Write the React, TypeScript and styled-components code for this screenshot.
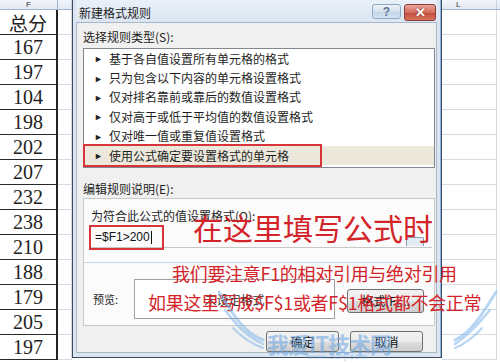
import styled, { createGlobalStyle } from 'styled-components'

const GlobalStyle = createGlobalStyle`
	html, body {
		margin: 0;
		padding: 0;
		background: #ffffff;
	}
	body {
		font-family: 'Noto Sans CJK SC', 'Noto Sans', sans-serif;
	}
`

const CJK = `'Noto Sans CJK SC', 'Noto Sans', sans-serif`

const Screen = styled.div`
	position: relative;
	width: 500px;
	height: 363px;
	overflow: hidden;
	display: flex;
	background: #fff;
`

const Sheet = styled.div<{ $w: number }>`
	width: ${(p) => p.$w}px;
	flex: none;
	display: flex;
	flex-direction: column;
`

const HeaderRow = styled.div`
	height: 10px;
	display: flex;
	background: linear-gradient(#f3f6fb, #e2e9f3);
	border-bottom: 1px solid #9eb6ce;
	box-sizing: border-box;
`

const HeaderCell = styled.div<{ $w: number; $bold?: boolean; $left?: boolean }>`
	width: ${(p) => p.$w}px;
	flex: none;
	font-family: 'Liberation Sans', sans-serif;
	font-size: 8px;
	line-height: 9px;
	color: #333;
	text-align: ${(p) => (p.$left ? 'left' : 'center')};
	padding-left: ${(p) => (p.$left ? 14 : 0)}px;
	border-right: 1px solid ${(p) => (p.$bold ? '#9eb6ce' : '#c5d2e0')};
	box-sizing: border-box;
`

const Row = styled.div`
	height: 25px;
	display: flex;
`

const Cell = styled.div<{ $w: number; $strong?: boolean }>`
	width: ${(p) => p.$w}px;
	flex: none;
	box-sizing: border-box;
	display: flex;
	align-items: center;
	justify-content: center;
	font-family: 'Liberation Serif', 'Noto Sans CJK SC', serif;
	font-size: 20px;
	color: #222;
	border-bottom: 1px solid ${(p) => (p.$strong ? '#2a2a2a' : '#d5dce6')};
	border-right: ${(p) => (p.$strong ? '2px solid #222' : '1px solid #d5dce6')};
`

const CJKCell = styled(Cell)`
	font-family: ${CJK};
	font-size: 19px;
`

const Dialog = styled.div`
	width: 370px;
	height: 358px;
	flex: none;
	box-sizing: border-box;
	border: 1px solid #3c4a5c;
	border-top: none;
	background: #dbe6f2;
	display: flex;
	flex-direction: column;
	padding: 0 4px 4px 3px;
	box-shadow: inset -1px 0 0 #8cb4dc;
`

const TitleBar = styled.div`
	height: 22px;
	flex: none;
	display: flex;
	align-items: center;
	background: linear-gradient(#e9f0f8, #dbe6f2);
`

const Title = styled.div`
	flex: 1;
	font-size: 12px;
	color: #1e1e1e;
	padding-left: 3px;
	padding-top: 2px;
`

const CapButton = styled.div<{ $close?: boolean }>`
	width: ${(p) => (p.$close ? 32 : 29)}px;
	height: ${(p) => (p.$close ? 17 : 15)}px;
	margin-top: ${(p) => (p.$close ? 2 : 1)}px;
	margin-right: ${(p) => (p.$close ? 1 : 3)}px;
	border-radius: 3px;
	box-sizing: border-box;
	border: 1px solid ${(p) => (p.$close ? '#8a3b34' : '#8ea8c4')};
	background: ${(p) =>
		p.$close
			? 'linear-gradient(#eaa69c, #d46a5c 50%, #c24a3c 51%, #d8765e)'
			: 'linear-gradient(#eef3f9, #d4e0ee 50%, #c3d3e6 51%, #d6e3f1)'};
	display: flex;
	align-items: center;
	justify-content: center;
	font-family: 'Liberation Sans', sans-serif;
	font-weight: bold;
	font-size: ${(p) => (p.$close ? 13 : 12)}px;
	color: ${(p) => (p.$close ? '#fff' : '#5d7591')};
	text-shadow: ${(p) => (p.$close ? '0 0 2px #7a2018' : 'none')};
`

const Body = styled.div`
	flex: 1;
	min-height: 0;
	background: #f0f0f0;
	border: 1px solid #a9b8c8;
	display: flex;
	flex-direction: column;
	padding: 5px 3px 0 6px;
	font-size: 12px;
	color: #1e1e1e;
`

const Label = styled.div`
	height: 18px;
	line-height: 18px;
	flex: none;
`

const ListBox = styled.div`
	margin-top: 2px;
	width: 352px;
	height: 120px;
	flex: none;
	box-sizing: border-box;
	border: 1px solid #828790;
	background: #fff;
`

const ListItem = styled.div<{ $selected?: boolean }>`
	position: relative;
	height: 19.4px;
	display: flex;
	align-items: center;
	background: ${(p) => (p.$selected ? '#ece8dc' : 'transparent')};
	line-height: 1;
`

const Arrow = styled.span`
	width: 25px;
	text-align: right;
	padding-right: 6px;
	box-sizing: border-box;
	font-size: 9px;
	color: #222;
`

const RedBox = styled.div<{ $w: number; $h: number }>`
	position: absolute;
	left: -1px;
	top: -2px;
	width: ${(p) => p.$w}px;
	height: ${(p) => p.$h}px;
	border: 2px solid #d8343a;
	box-sizing: border-box;
	pointer-events: none;
`

const Section = styled.div`
	margin-top: 13px;
	flex: none;
`

const SectionLabel = styled(Label)`
	height: 16px;
	line-height: 16px;
`

const GroupBox = styled.div`
	margin-top: 1px;
	width: 352px;
	height: 128px;
	box-sizing: border-box;
	border: 1px solid #c9c9c9;
	background: #fbfbfb;
	display: flex;
	flex-direction: column;
`

const GroupTop = styled.div`
	height: 64px;
	flex: none;
	padding: 8px 5px 0 7px;
	box-sizing: border-box;
	border-bottom: 1px solid #c8d8ea;
	line-height: 17px;
`

const FormulaInput = styled.div`
	position: relative;
	margin-top: 3px;
	margin-left: -1px;
	width: 342px;
	height: 21px;
	box-sizing: border-box;
	border-bottom: 1px solid #c7c7c7;
	display: flex;
	align-items: center;
	padding-left: 5px;
	font-family: 'Liberation Sans', sans-serif;
	font-size: 12px;
	color: #111;
`

const Caret = styled.span`
	display: inline-block;
	width: 1px;
	height: 13px;
	background: #111;
	margin-left: 1px;
`

const RangeButton = styled.div`
	position: absolute;
	right: 8px;
	bottom: 1px;
	width: 16px;
	height: 8px;
	border: 1px solid #8a9ab0;
	border-bottom: none;
	border-radius: 2px 2px 0 0;
	background: #e4ebf4;
`

const GroupBottom = styled.div`
	flex: 1;
	display: flex;
	align-items: center;
	padding: 10px 0 0 9px;
`

const PreviewLabel = styled.div`
	width: 41px;
	flex: none;
	font-size: 11px;
`

const PreviewBox = styled.div`
	width: 201px;
	height: 40px;
	box-sizing: border-box;
	border: 1px solid #a0a0a0;
	background: #fff;
	display: flex;
	align-items: center;
	justify-content: center;
	font-size: 12px;
	color: #333;
`

const Button = styled.div<{ $w: number }>`
	width: ${(p) => p.$w}px;
	height: 21px;
	box-sizing: border-box;
	border: 1px solid #707070;
	border-radius: 3px;
	background: linear-gradient(#f2f2f2, #ebebeb 50%, #dddddd 51%, #cfcfcf);
	display: flex;
	align-items: center;
	justify-content: center;
	font-size: 12px;
	line-height: 1;
	color: #111;
`

const FormatButton = styled(Button)`
	margin-left: 12px;
	margin-top: 4px;
	height: 24px;
`

const Footer = styled.div`
	flex: 1;
	display: flex;
	justify-content: flex-end;
	align-items: flex-start;
	gap: 11px;
	padding: 5px 10px 0 0;
`

const GridLine = styled.div`
	height: 25px;
	flex: none;
	box-sizing: border-box;
	border-bottom: 1px solid #d5dce6;
	border-right: 1px solid #d5dce6;
	width: 55px;
`

const Note = styled.div<{ $x: number; $y: number; $size: number }>`
	position: absolute;
	left: ${(p) => p.$x}px;
	top: ${(p) => p.$y}px;
	font-family: ${CJK};
	font-size: ${(p) => p.$size}px;
	line-height: 1;
	color: #d3242a;
	white-space: nowrap;
	letter-spacing: ${(p) => (p.$size > 24 ? 0 : -0.3)}px;
`

const Watermark = styled.div`
	position: absolute;
	left: 215px;
	top: 288px;
	width: 285px;
	height: 75px;
	pointer-events: none;
	opacity: 0.55;
`

const WatermarkText = styled.div`
	position: absolute;
	left: 52px;
	top: 44px;
	font-family: ${CJK};
	font-weight: bold;
	font-size: 22px;
	line-height: 1;
	color: #6aa6e2;
	letter-spacing: -1px;
`

const WatermarkSub = styled.div`
	position: absolute;
	left: 92px;
	top: 65px;
	font-family: 'Liberation Sans', sans-serif;
	font-size: 8px;
	line-height: 1;
	color: #6aa6e2;
	letter-spacing: 1px;
`

const rules = [
	'基于各自值设置所有单元格的格式',
	'只为包含以下内容的单元格设置格式',
	'仅对排名靠前或靠后的数值设置格式',
	'仅对高于或低于平均值的数值设置格式',
	'仅对唯一值或重复值设置格式',
	'使用公式确定要设置格式的单元格',
]

const scores = [167, 197, 104, 198, 202, 207, 232, 238, 210, 188, 179, 205, 197]

export default function App() {
	return (
		<>
			<GlobalStyle />
			<Screen>
				<Sheet $w={72}>
					<HeaderRow>
						<HeaderCell $w={58} $bold>
							F
						</HeaderCell>
						<HeaderCell $w={14} />
					</HeaderRow>
					<Row>
						<CJKCell $w={58} $strong>
							总分
						</CJKCell>
						<Cell $w={14} />
					</Row>
					{scores.map((s, i) => (
						<Row key={i}>
							<Cell $w={58} $strong>
								{s}
							</Cell>
							<Cell $w={14} />
						</Row>
					))}
				</Sheet>

				<Dialog>
					<TitleBar>
						<Title>新建格式规则</Title>
						<CapButton>?</CapButton>
						<CapButton $close>✕</CapButton>
					</TitleBar>
					<Body>
						<Label>选择规则类型(S):</Label>
						<ListBox>
							{rules.map((r, i) => (
								<ListItem key={r} $selected={i === rules.length - 1}>
									<Arrow>►</Arrow>
									{r}
									{i === rules.length - 1 && <RedBox $w={239} $h={23} />}
								</ListItem>
							))}
						</ListBox>

						<Section>
							<SectionLabel>编辑规则说明(E):</SectionLabel>
							<GroupBox>
								<GroupTop>
									<div>为符合此公式的值设置格式(O):</div>
									<FormulaInput>
										=$F1&gt;200
										<Caret />
										<RedBox $w={75} $h={25} />
										<RangeButton />
									</FormulaInput>
								</GroupTop>
								<GroupBottom>
									<PreviewLabel>预览:</PreviewLabel>
									<PreviewBox>未设定格式</PreviewBox>
									<FormatButton $w={77}>格式(F)...</FormatButton>
								</GroupBottom>
							</GroupBox>
						</Section>

						<Footer>
							<Button $w={73}>确定</Button>
							<Button $w={73}>取消</Button>
						</Footer>
					</Body>
				</Dialog>

				<Sheet $w={58}>
					<HeaderRow>
						<HeaderCell $w={55} $left>
							L
						</HeaderCell>
					</HeaderRow>
					{scores.concat(0).map((_, i) => (
						<GridLine key={i} />
					))}
				</Sheet>

				<Note $x={193} $y={212} $size={30}>
					在这里填写公式时
				</Note>
				<Note $x={172} $y={264} $size={18}>
					我们要注意F1的相对引用与绝对引用
				</Note>
				<Note $x={148} $y={293} $size={18}>
					如果这里写成$F$1或者F$1格式都不会正常
				</Note>

				<Watermark>
					<svg width="285" height="75" viewBox="0 0 285 75">
						<g fill="none" stroke="#7fb6ea" strokeLinecap="round">
							<path d="M4 4 C 20 30, 30 45, 48 52" strokeWidth="3" />
							<path d="M10 22 C 22 38, 32 48, 48 56" strokeWidth="2.5" />
							<path d="M18 40 C 28 50, 36 56, 48 60" strokeWidth="2" />
							<path d="M281 4 C 265 30, 255 45, 240 52" strokeWidth="3" />
							<path d="M275 22 C 262 38, 252 48, 240 56" strokeWidth="2.5" />
							<path d="M267 40 C 258 50, 250 56, 240 60" strokeWidth="2" />
						</g>
					</svg>
					<WatermarkText>我爱IT技术网</WatermarkText>
					<WatermarkSub>www.52ij.com</WatermarkSub>
				</Watermark>
			</Screen>
		</>
	)
}
